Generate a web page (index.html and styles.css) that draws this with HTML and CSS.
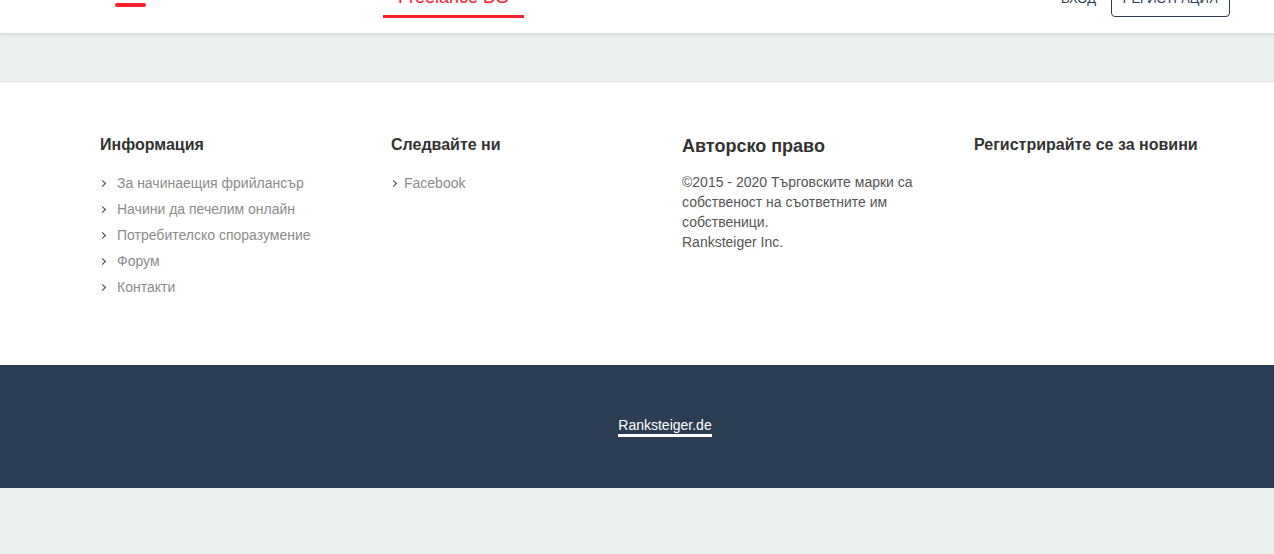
FILE: index.html
```html
<!DOCTYPE html>
<html lang="bg">
<head>
<meta charset="utf-8">
<title>Freelance BG</title>
<link rel="stylesheet" href="styles.css">
</head>
<body>
<header class="header">
  <div class="logo-bar"></div>
  <a class="nav-active" href="#">Freelance BG</a>
  <div class="header-right">
    <a class="login" href="#">ВХОД</a>
    <a class="register" href="#">РЕГИСТРАЦИЯ</a>
  </div>
</header>
<div class="band"></div>
<footer class="footer">
  <div class="footer-cols">
    <div class="col">
      <h4 class="col-title">Информация</h4>
      <ul class="links">
        <li><a href="#">За начинаещия фрийлансър</a></li>
        <li><a href="#">Начини да печелим онлайн</a></li>
        <li><a href="#">Потребителско споразумение</a></li>
        <li><a href="#">Форум</a></li>
        <li><a href="#">Контакти</a></li>
      </ul>
    </div>
    <div class="col">
      <h4 class="col-title">Следвайте ни</h4>
      <ul class="links links-tight">
        <li><a href="#">Facebook</a></li>
      </ul>
    </div>
    <div class="col">
      <h4 class="col-title col-title-lg">Авторско право</h4>
      <p class="copy">©2015 - 2020 Търговските марки са собственост на съответните им собственици.<br>Ranksteiger Inc.</p>
    </div>
    <div class="col">
      <h4 class="col-title">Регистрирайте се за новини</h4>
    </div>
  </div>
</footer>
<div class="bottom-bar">
  <a class="brand-link" href="#">Ranksteiger.de</a>
</div>
</body>
</html>
```
FILE: styles.css
```css
* { box-sizing: border-box; }
html, body { margin: 0; padding: 0; }
body {
  background: #e9efef;
  font-family: "Liberation Sans", Arial, sans-serif;
  color: #333;
  min-height: 554px;
}
a { text-decoration: none; }

.header {
  height: 33px;
  background: #fff;
  box-shadow: 0 1px 4px rgba(0, 0, 0, 0.13);
  display: flex;
  align-items: flex-end;
  padding: 0 44px 18px 115px;
  overflow: hidden;
  position: relative;
  z-index: 1;
}
.logo-bar {
  width: 31px;
  height: 4px;
  background: #f5222d;
  border-radius: 2px;
  margin-bottom: 8px;
  flex: none;
}
.nav-active {
  margin-left: 237px;
  width: 141px;
  text-align: center;
  color: #f5222d;
  font-size: 18px;
  line-height: 20px;
  padding-bottom: 8px;
  border-bottom: 3px solid #f5222d;
  margin-bottom: -3px;
  flex: none;
}
.header-right {
  margin-left: auto;
  display: flex;
  align-items: flex-end;
}
.login {
  color: #2a3d52;
  font-size: 13px;
  line-height: 16px;
  margin-right: 15px;
  margin-bottom: 8px;
}
.register {
  width: 119px;
  height: 32px;
  border: 1px solid #2a3d52;
  border-radius: 4px;
  color: #2a3d52;
  font-size: 13px;
  line-height: 16px;
  text-align: center;
  margin-bottom: -2px;
  display: flex;
  align-items: flex-end;
  justify-content: center;
  padding-bottom: 9px;
}

.band { height: 50px; }

.footer {
  background: #fff;
  height: 282px;
  padding: 53px 0 0 100px;
}
.footer-cols {
  display: grid;
  grid-template-columns: 291px 291px 292px 291px;
}
.col-title {
  margin: 0 0 16px;
  font-size: 16px;
  line-height: 18px;
  font-weight: bold;
  color: #333;
}
.col-title-lg {
  font-size: 18px;
  line-height: 20px;
  margin-bottom: 16px;
}
.links {
  list-style: none;
  margin: 0;
  padding: 0;
}
.links li {
  line-height: 26px;
  font-size: 14px;
  position: relative;
  padding-left: 17px;
}
.links-tight li { padding-left: 13px; }
.links li::before {
  content: "";
  position: absolute;
  left: 0;
  top: 11px;
  width: 4px;
  height: 4px;
  border-right: 1px solid #444;
  border-top: 1px solid #444;
  transform: rotate(45deg);
}
.links a { color: #8c8c8c; }
.copy {
  margin: 0;
  font-size: 14px;
  line-height: 20px;
  color: #555;
  width: 240px;
}

.bottom-bar {
  background: #2a3d52;
  height: 123px;
  display: flex;
  justify-content: center;
  padding-top: 50px;
}
.brand-link {
  color: #fff;
  font-size: 14px;
  line-height: 20px;
  height: 22px;
  border-bottom: 3px solid #fff;
  align-self: flex-start;
  margin-left: 56px;
}
```
